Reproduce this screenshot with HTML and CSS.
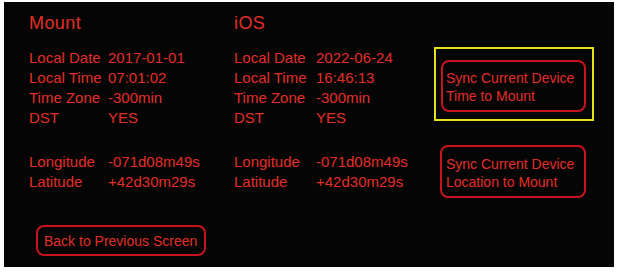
FILE: index.html
```html
<!DOCTYPE html>
<html>
<head>
<meta charset="utf-8">
<link rel="stylesheet" href="styles.css">
</head>
<body>
<div class="panel">
  <div class="top">
    <div class="info">
      <div class="block mount">
        <div class="title">Mount</div>
        <div class="grid rows">
          <span>Local Date</span><span>2017-01-01</span>
          <span>Local Time</span><span>07:01:02</span>
          <span>Time Zone</span><span>-300min</span>
          <span>DST</span><span>YES</span>
        </div>
        <div class="grid loc">
          <span>Longitude</span><span>-071d08m49s</span>
          <span>Latitude</span><span>+42d30m29s</span>
        </div>
      </div>
      <div class="block ios">
        <div class="title">iOS</div>
        <div class="grid rows">
          <span>Local Date</span><span>2022-06-24</span>
          <span>Local Time</span><span>16:46:13</span>
          <span>Time Zone</span><span>-300min</span>
          <span>DST</span><span>YES</span>
        </div>
        <div class="grid loc">
          <span>Longitude</span><span>-071d08m49s</span>
          <span>Latitude</span><span>+42d30m29s</span>
        </div>
      </div>
    </div>
    <div class="side">
      <div class="focus">
        <div class="btn btn-time">Sync Current Device<br>Time to Mount</div>
      </div>
      <div class="btn btn-loc">Sync Current Device<br>Location to Mount</div>
    </div>
  </div>
  <div class="btn btn-back">Back to Previous Screen</div>
</div>
</body>
</html>
```

FILE: styles.css
```css
html, body {
  margin: 0;
  padding: 0;
  background: #ffffff;
}
body {
  width: 619px;
  height: 274px;
  overflow: hidden;
  font-family: "Liberation Sans", Arial, sans-serif;
  color: #e22e28;
}
.panel {
  margin: 2px 5px 0 4px;
  width: 610px;
  height: 265px;
  background: #050505;
  box-sizing: border-box;
  padding: 11px 0 0 25px;
  display: flex;
  flex-direction: column;
}
.top {
  display: flex;
  align-items: flex-start;
}
.info {
  display: flex;
  width: 405px;
}
.mount { width: 205px; }
.ios { width: 200px; }
.title {
  font-size: 18px;
  line-height: 20px;
  letter-spacing: 0.4px;
}
.grid {
  display: grid;
  font-size: 15px;
  line-height: 20px;
  white-space: nowrap;
}
.mount .grid { grid-template-columns: 79px auto; }
.ios .grid { grid-template-columns: 82px auto; }
.rows { margin-top: 15px; }
.loc { margin-top: 24px; }
.side {
  margin-top: 34px;
  display: flex;
  flex-direction: column;
}
.focus {
  width: 160px;
  height: 74px;
  box-sizing: border-box;
  border: 2px solid #e6df1e;
  padding: 11px 6px 7px 5px;
}
.btn {
  box-sizing: border-box;
  border: 2px solid #c8121e;
  border-radius: 8px;
  font-size: 14px;
  line-height: 18px;
  white-space: nowrap;
}
.btn-time {
  height: 52px;
  padding: 7px 3px 5px 3px;
}
.btn-loc {
  margin-top: 24px;
  margin-left: 6px;
  width: 146px;
  height: 53px;
  padding: 8px 4px 5px 4px;
}
.btn-back {
  margin-top: 27px;
  margin-left: 7px;
  width: 170px;
  height: 31px;
  padding: 5px 6px 4px 6px;
}
```
